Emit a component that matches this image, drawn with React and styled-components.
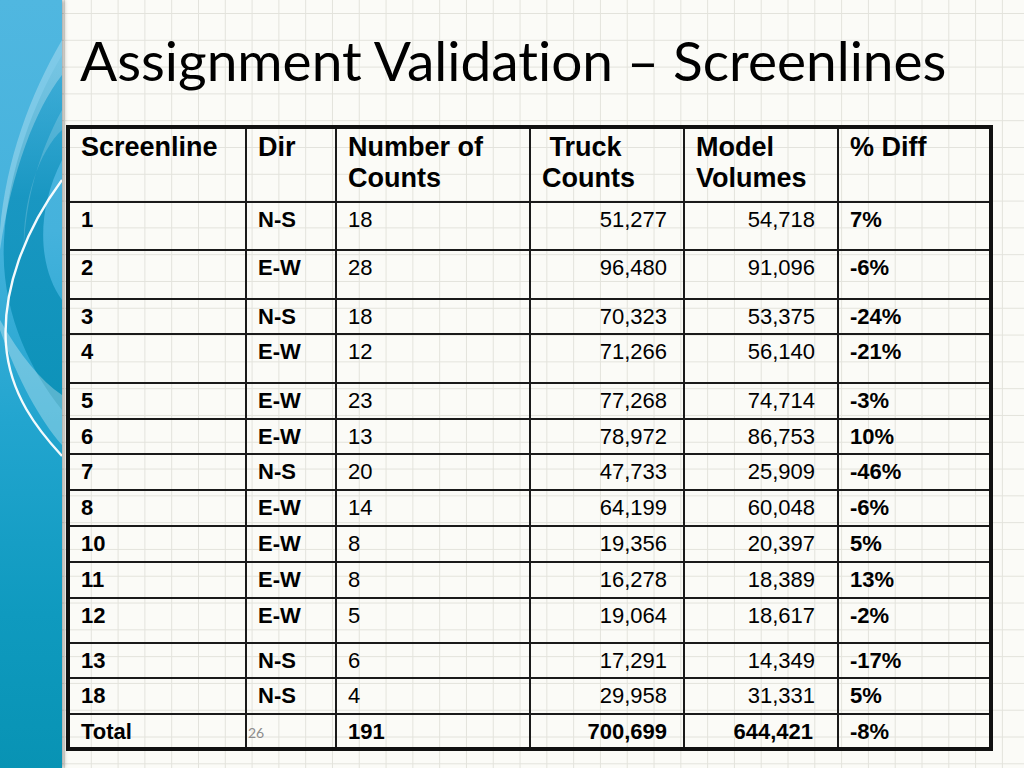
import React from 'react';
import styled, { createGlobalStyle } from 'styled-components';

const GlobalStyle = createGlobalStyle`
  html, body {
    margin: 0;
    padding: 0;
    background: #fbfbf7;
  }
  * {
    box-sizing: border-box;
  }
`;

const rows = [
  ['1', 'N-S', '18', '51,277', '54,718', '7%', 48],
  ['2', 'E-W', '28', '96,480', '91,096', '-6%', 49],
  ['3', 'N-S', '18', '70,323', '53,375', '-24%', 35],
  ['4', 'E-W', '12', '71,266', '56,140', '-21%', 49],
  ['5', 'E-W', '23', '77,268', '74,714', '-3%', 36],
  ['6', 'E-W', '13', '78,972', '86,753', '10%', 35],
  ['7', 'N-S', '20', '47,733', '25,909', '-46%', 36],
  ['8', 'E-W', '14', '64,199', '60,048', '-6%', 36],
  ['10', 'E-W', '8', '19,356', '20,397', '5%', 36],
  ['11', 'E-W', '8', '16,278', '18,389', '13%', 36],
  ['12', 'E-W', '5', '19,064', '18,617', '-2%', 45],
  ['13', 'N-S', '6', '17,291', '14,349', '-17%', 35],
  ['18', 'N-S', '4', '29,958', '31,331', '5%', 36],
];

const total = ['Total', '', '191', '700,699', '644,421', '-8%', 35];

export default function App() {
  return (
    <Slide>
      <GlobalStyle />
      <SidePanel>
        <Swirl />
      </SidePanel>

      <Content>
        <Title>Assignment Validation – Screenlines</Title>

        <TableWrap>
          <DataTable>
            <colgroup>
              <col style={{ width: 178 }} />
              <col style={{ width: 90 }} />
              <col style={{ width: 194 }} />
              <col style={{ width: 154 }} />
              <col style={{ width: 154 }} />
              <col style={{ width: 153 }} />
            </colgroup>
            <thead>
              <tr>
                <Head>Screenline</Head>
                <Head>Dir</Head>
                <Head>Number of<br />Counts</Head>
                <Head>&nbsp;Truck<br />Counts</Head>
                <Head>Model<br />Volumes</Head>
                <Head>% Diff</Head>
              </tr>
            </thead>
            <tbody>
              {rows.map(([id, dir, n, truck, model, diff, h]) => (
                <Row key={id} $h={h}>
                  <Cell $bold>{id}</Cell>
                  <Cell $bold>{dir}</Cell>
                  <Cell>{n}</Cell>
                  <NumCell $pad={16}>{truck}</NumCell>
                  <NumCell $pad={22}>{model}</NumCell>
                  <Cell $bold>{diff}</Cell>
                </Row>
              ))}
              <Row $h={total[6]}>
                <Cell $bold>{total[0]}</Cell>
                <Cell />
                <Cell $bold>{total[2]}</Cell>
                <NumCell $bold $pad={16}>{total[3]}</NumCell>
                <NumCell $bold $pad={24}>{total[4]}</NumCell>
                <Cell $bold>{total[5]}</Cell>
              </Row>
            </tbody>
          </DataTable>
          <SlideNumber>26</SlideNumber>
        </TableWrap>
      </Content>
    </Slide>
  );
}

function Swirl() {
  return (
    <svg width="62" height="768" viewBox="0 0 62 768">
      <defs>
        <linearGradient id="base" x1="0" y1="0" x2="0" y2="1">
          <stop offset="0" stopColor="#50b7e0" />
          <stop offset="0.3" stopColor="#45b2dc" />
          <stop offset="0.55" stopColor="#22a5cf" />
          <stop offset="0.8" stopColor="#0f9abf" />
          <stop offset="1" stopColor="#0893b4" />
        </linearGradient>
        <linearGradient id="band" x1="0" y1="0" x2="0" y2="1">
          <stop offset="0" stopColor="#1795c2" stopOpacity="0.2" />
          <stop offset="0.4" stopColor="#1192bd" stopOpacity="0.85" />
          <stop offset="1" stopColor="#0a90b6" stopOpacity="0.9" />
        </linearGradient>
      </defs>
      <rect width="62" height="768" fill="url(#base)" />
      <path d="M62 55 C35 100 8 170 4 240 C0 310 30 370 62 410 L62 300 C40 270 34 215 62 160 Z" fill="url(#band)" />
      <path d="M62 40 C30 95 6 160 0 230 L0 250 C12 170 35 110 62 75 Z" fill="#ffffff" opacity="0.28" />
      <path d="M62 110 C40 150 25 200 24 250 C22 200 40 150 62 130 Z" fill="#ffffff" opacity="0.18" />
      <path d="M0 330 C18 380 40 420 62 445 L62 395 C40 380 20 355 0 320 Z" fill="#ffffff" opacity="0.3" />
      <path d="M62 180 C25 230 2 290 6 345 C10 395 38 430 62 456" fill="none" stroke="#ffffff" strokeWidth="2.4" opacity="0.95" />
    </svg>
  );
}

/** Styled components */
const Slide = styled.div`
  display: flex;
  width: 1024px;
  height: 768px;
  overflow: hidden;
  background: #fbfbf7;
`;

const SidePanel = styled.div`
  position: relative;
  z-index: 1;
  width: 62px;
  flex: 0 0 62px;
  box-shadow: 2px 0 4px rgba(0, 0, 0, 0.35);

  svg {
    display: block;
  }
`;

const Content = styled.main`
  flex: 1;
  padding: 28px 0 0 4px;
  background-color: #fbfbf7;
  background-image:
    linear-gradient(to right, #e3e3dc 1px, transparent 1px),
    linear-gradient(to bottom, #e3e3dc 1px, transparent 1px);
  background-size: 26.8px 26.8px;
  background-position: 2px 13px;
`;

const Title = styled.h1`
  margin: 0 0 0 14px;
  font-family: Lato, "Open Sans", sans-serif;
  font-weight: 400;
  font-size: 55px;
  line-height: 65px;
  color: #000;
  white-space: nowrap;
  font-variant-ligatures: none;
  font-feature-settings: "liga" 0;
`;

const TableWrap = styled.div`
  position: relative;
  margin-top: 32px;
  width: 923px;
`;

const DataTable = styled.table`
  border-collapse: collapse;
  table-layout: fixed;
  width: 923px;
  border: 4px solid #111;
  font-family: "Liberation Sans", Arial, sans-serif;
  color: #000;
`;

const Head = styled.th`
  height: 75px;
  padding: 3px 10px 0 11px;
  border: 2px solid #1a1a1a;
  font-size: 27px;
  line-height: 31px;
  font-weight: 700;
  text-align: left;
  vertical-align: top;
`;

const Row = styled.tr`
  height: ${p => p.$h}px;
`;

const Cell = styled.td`
  padding: 4px 10px 0 11px;
  border: 2px solid #1a1a1a;
  font-size: 22px;
  line-height: 25px;
  font-weight: ${p => (p.$bold ? 700 : 400)};
  text-align: left;
  vertical-align: top;
`;

const NumCell = styled(Cell)`
  text-align: right;
  padding-right: ${p => p.$pad}px;
`;

const SlideNumber = styled.span`
  position: absolute;
  left: 182px;
  bottom: 10px;
  font-family: Lato, "Open Sans", sans-serif;
  font-size: 14px;
  color: #8c8c8c;
`;
